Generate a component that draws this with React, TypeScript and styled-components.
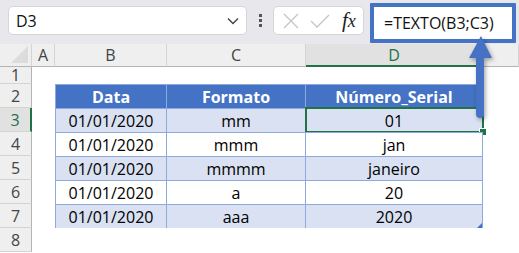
import React from 'react';
import styled, { createGlobalStyle } from 'styled-components';

const GlobalStyle = createGlobalStyle`
  html, body {
    margin: 0;
    padding: 0;
    background: #ffffff;
  }
  body {
    font-family: 'Open Sans', 'Noto Sans', sans-serif;
    color: #000;
  }
`;

const headers = ['Data', 'Formato', 'Número_Serial'];

const rows = [
  ['01/01/2020', 'mm', '01'],
  ['01/01/2020', 'mmm', 'jan'],
  ['01/01/2020', 'mmmm', 'janeiro'],
  ['01/01/2020', 'a', '20'],
  ['01/01/2020', 'aaa', '2020'],
];

const columns = ['A', 'B', 'C', 'D', ''];

function App() {
  return (
    <>
      <GlobalStyle />
      <Screen>
        <TopBar>
          <NameBox>
            <span>D3</span>
            <Chevron viewBox="0 0 12 8">
              <path d="M1 1.5 L6 6.5 L11 1.5" />
            </Chevron>
          </NameBox>
          <Dots>
            <i />
            <i />
            <i />
          </Dots>
          <ButtonsBox>
            <svg width="16" height="16" viewBox="0 0 16 16">
              <path d="M1 1 L15 15 M15 1 L1 15" stroke="#c4c4c4" strokeWidth="1.3" fill="none" />
            </svg>
            <svg width="20" height="16" viewBox="0 0 20 16">
              <path d="M1 8 L7 14 L19 2" stroke="#c4c4c4" strokeWidth="1.3" fill="none" />
            </svg>
            <Fx>
              f<sub>x</sub>
            </Fx>
          </ButtonsBox>
          <FormulaBox>=TEXTO(B3;C3)</FormulaBox>
        </TopBar>

        <Sheet>
          <Corner>
            <svg width="17" height="17" viewBox="0 0 17 17">
              <path d="M17 0 L17 17 L0 17 Z" fill="#dcdcdc" />
            </svg>
          </Corner>
          {columns.map((c, i) => (
            <ColHeader key={i} $active={c === 'D'}>
              {c}
            </ColHeader>
          ))}

          <RowHeader>1</RowHeader>
          {columns.map((c, i) => (
            <Blank key={i} />
          ))}

          <RowHeader>2</RowHeader>
          <Blank />
          {headers.map((h, i) => (
            <HeadCell key={h} $first={i === 0}>
              {h}
            </HeadCell>
          ))}
          <Blank />

          {rows.map((r, ri) => (
            <React.Fragment key={ri}>
              <RowHeader $active={ri === 0}>{ri + 3}</RowHeader>
              <Blank />
              {r.map((v, ci) => (
                <Cell key={ci} $first={ci === 0} $band={ri % 2 === 0}>
                  {v}
                  {ri === 0 && ci === 2 && <Selection />}
                  {ri === rows.length - 1 && ci === 2 && <ResizeMark />}
                </Cell>
              ))}
              <Blank />
            </React.Fragment>
          ))}

          <RowHeader>8</RowHeader>
          {columns.map((c, i) => (
            <Blank key={i} />
          ))}
        </Sheet>

        <Arrow width="519" height="253" viewBox="0 0 519 253">
          <defs>
            <filter id="shadow" x="-50%" y="-20%" width="200%" height="140%">
              <feDropShadow dx="1.5" dy="2" stdDeviation="2" floodColor="#000" floodOpacity="0.35" />
            </filter>
          </defs>
          <g filter="url(#shadow)" fill="#4472c4">
            <path d="M476 57 L484 57 L484 114 Q484 118 480 118 Q476 118 476 114 Z" />
            <path d="M469 58 L492 58 L481 36 Z" />
          </g>
        </Arrow>
      </Screen>
    </>
  );
}

const Screen = styled.div`
  position: relative;
  width: 519px;
  height: 253px;
  overflow: hidden;
  background: #ffffff;
`;

const TopBar = styled.div`
  height: 44px;
  background: #e8e8ec;
  display: flex;
  align-items: flex-start;
  padding: 6px 0 0 8px;
  box-sizing: border-box;
`;

const NameBox = styled.div`
  width: 239px;
  height: 29px;
  box-sizing: border-box;
  background: #fff;
  border: 1px solid #d6d6da;
  border-radius: 5px;
  display: flex;
  align-items: center;
  justify-content: space-between;
  padding: 0 7px 0 7px;
  font-size: 16px;
  color: #111;
`;

const Chevron = styled.svg`
  width: 12px;
  height: 8px;
  fill: none;
  stroke: #444;
  stroke-width: 1.4;
`;

const Dots = styled.div`
  width: 26px;
  height: 29px;
  display: flex;
  flex-direction: column;
  align-items: center;
  justify-content: center;
  gap: 2px;

  i {
    width: 3px;
    height: 3px;
    background: #555;
  }
`;

const ButtonsBox = styled.div`
  width: 91px;
  height: 29px;
  box-sizing: border-box;
  background: #fff;
  border: 1px solid #d6d6da;
  border-radius: 5px;
  display: flex;
  align-items: center;
  gap: 11px;
  padding: 0 6px 0 9px;
`;

const Fx = styled.span`
  font-family: 'Liberation Serif', 'DejaVu Serif', serif;
  font-style: italic;
  font-size: 21px;
  color: #222;
  line-height: 1;
  margin-left: 1px;

  sub {
    font-size: 18px;
    vertical-align: 0;
  }
`;

const FormulaBox = styled.div`
  margin-left: 6px;
  margin-top: -3px;
  width: 146px;
  height: 40px;
  box-sizing: border-box;
  border: 4px solid #4472c4;
  border-radius: 1px;
  background: #fff;
  font-size: 16px;
  line-height: 32px;
  padding-left: 10px;
  color: #111;
  white-space: nowrap;
`;

const Sheet = styled.div`
  display: grid;
  grid-template-columns: 32px 23px 112px 139px 177px 1fr;
  grid-template-rows: 23px 17px repeat(7, 24px);
  font-size: 16px;
`;

const Corner = styled.div`
  background: #efefef;
  border-right: 1px solid #d4d4d4;
  border-bottom: 1px solid #b4b4b4;
  box-sizing: border-box;
  display: flex;
  align-items: flex-end;
  justify-content: flex-end;
  padding: 0 3px 3px 0;
`;

const ColHeader = styled.div<{ $active?: boolean }>`
  background: ${(p) => (p.$active ? '#e1e1e1' : '#efefef')};
  border-right: 1px solid #d4d4d4;
  border-bottom: ${(p) => (p.$active ? '2px solid #217346' : '1px solid #b4b4b4')};
  box-sizing: border-box;
  display: flex;
  align-items: center;
  justify-content: center;
  color: ${(p) => (p.$active ? '#217346' : '#444')};
  font-size: 16px;
`;

const RowHeader = styled.div<{ $active?: boolean }>`
  background: ${(p) => (p.$active ? '#e1e1e1' : '#efefef')};
  border-right: ${(p) => (p.$active ? '2px solid #217346' : '1px solid #b4b4b4')};
  border-bottom: 1px solid #d4d4d4;
  box-sizing: border-box;
  display: flex;
  align-items: center;
  justify-content: center;
  color: ${(p) => (p.$active ? '#217346' : '#444')};
  font-size: 16px;
  line-height: 16px;
`;

const Blank = styled.div`
  background: #fff;
`;

const HeadCell = styled.div<{ $first?: boolean }>`
  background: #4472c4;
  color: #fff;
  font-weight: 700;
  display: flex;
  align-items: center;
  justify-content: center;
  border-top: 1px solid #8ea9db;
  border-right: 1px solid #8ea9db;
  border-left: ${(p) => (p.$first ? '1px solid #8ea9db' : 'none')};
  box-sizing: border-box;
`;

const Cell = styled.div<{ $first?: boolean; $band?: boolean }>`
  position: relative;
  background: ${(p) => (p.$band ? '#d9e1f2' : '#fff')};
  display: flex;
  align-items: center;
  justify-content: center;
  border-top: 1px solid #8ea9db;
  border-right: 1px solid #8ea9db;
  border-left: ${(p) => (p.$first ? '1px solid #8ea9db' : 'none')};
  box-sizing: border-box;

  &:nth-last-child(-n + 4) {
    border-bottom: 1px solid #8ea9db;
  }
`;

const Selection = styled.div`
  position: absolute;
  left: -1px;
  top: -2px;
  right: -2px;
  bottom: -1px;
  border: 2px solid #217346;
  pointer-events: none;

  &::after {
    content: '';
    position: absolute;
    right: -5px;
    bottom: -5px;
    width: 6px;
    height: 6px;
    background: #217346;
    border: 1px solid #fff;
  }
`;

const ResizeMark = styled.div`
  position: absolute;
  right: 0;
  bottom: 0;
  width: 0;
  height: 0;
  border-left: 5px solid transparent;
  border-bottom: 5px solid #4472c4;
`;

const Arrow = styled.svg`
  position: absolute;
  left: 0;
  top: 0;
  pointer-events: none;
`;

export default App;
